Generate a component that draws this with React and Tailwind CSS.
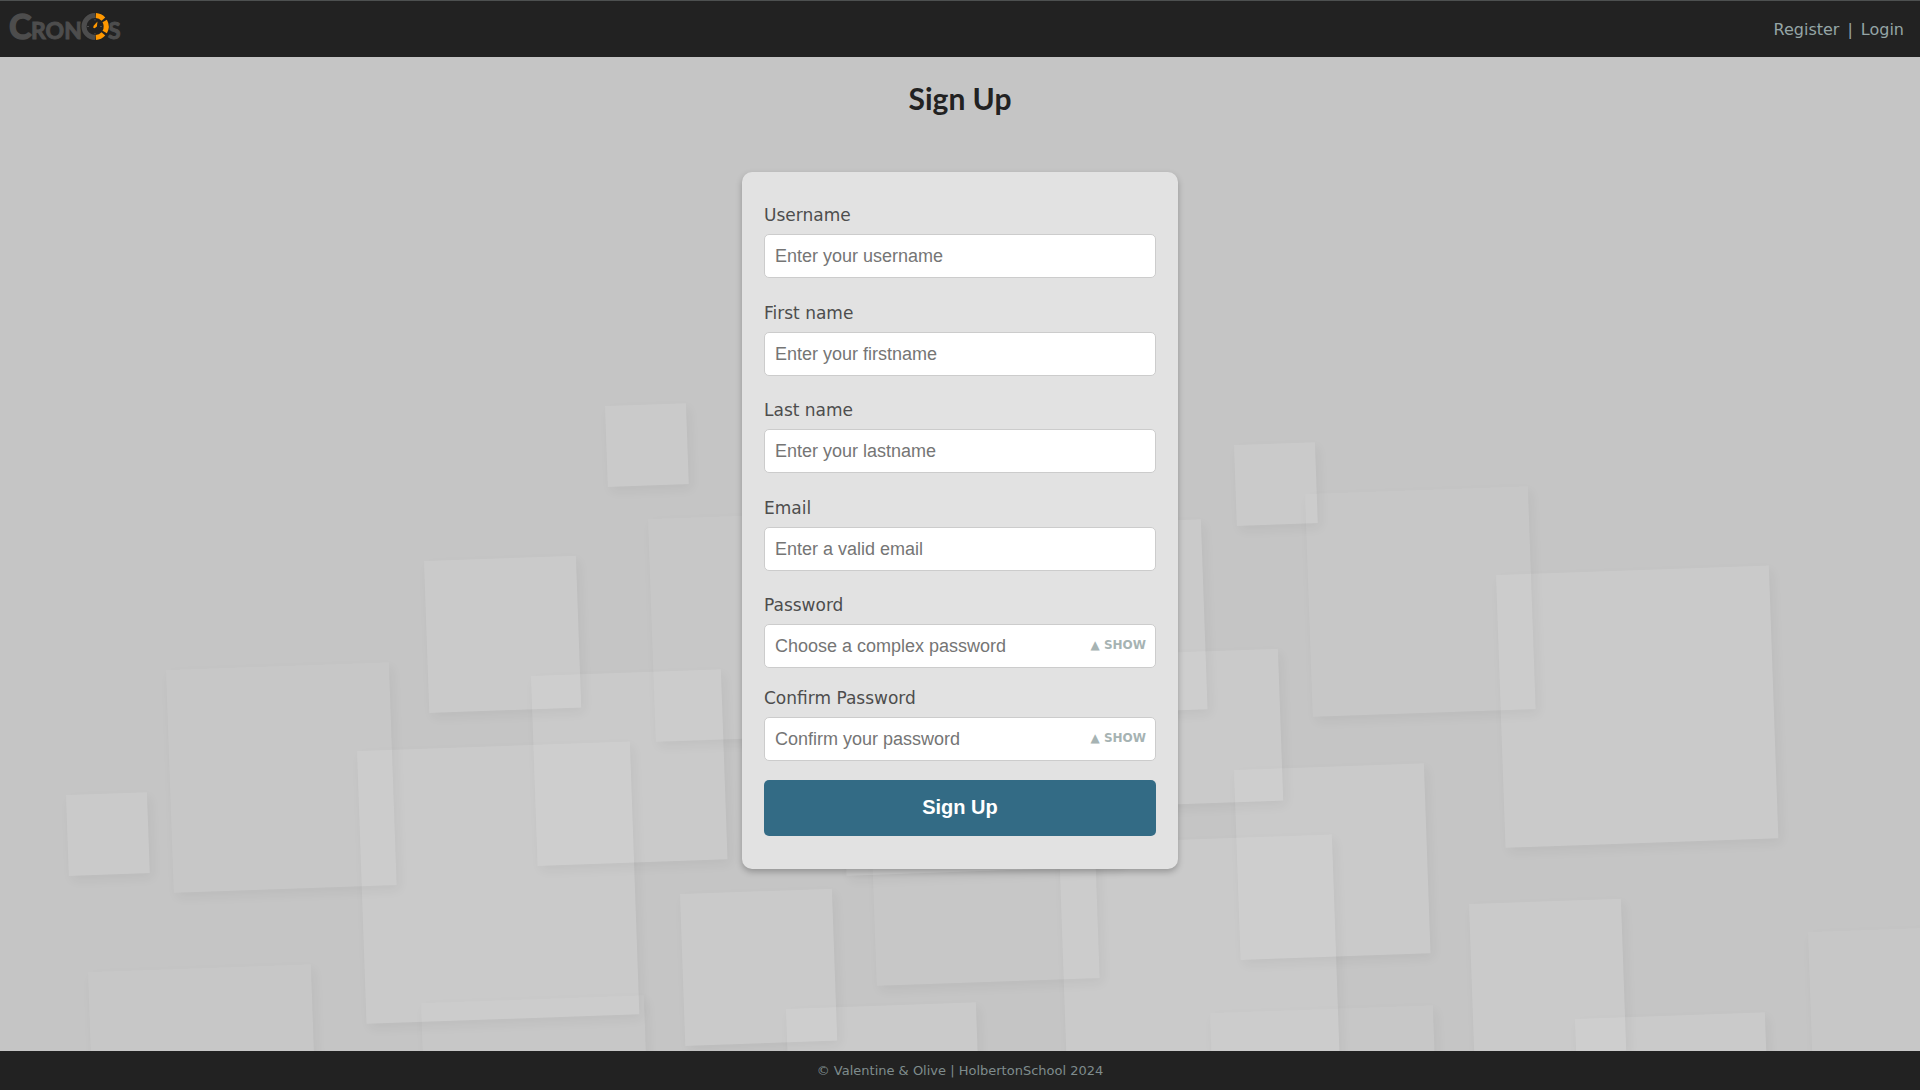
import { useState } from "react";

const SQUARES = [
  [605, 407, 81, 0], [424, 562, 152, 0], [166, 671, 223, 1], [531, 677, 190, 0],
  [648, 520, 223, 1], [357, 752, 273, 0], [66, 796, 81, 0], [88, 973, 223, 1],
  [421, 1004, 223, 1], [680, 895, 152, 0], [786, 1010, 190, 0], [869, 764, 223, 1],
  [1059, 845, 273, 0], [1234, 771, 190, 0], [1126, 655, 152, 0], [1011, 527, 190, 0],
  [1234, 446, 81, 0], [1305, 495, 223, 1], [1496, 576, 273, 0], [1469, 905, 152, 0],
  [1575, 1020, 190, 0], [1808, 933, 223, 1], [1210, 1014, 223, 1], [837, 604, 273, 0],
];

function Backdrop() {
  return (
    <svg aria-hidden="true" viewBox="0 57 1920 994" preserveAspectRatio="xMidYMid slice" className="absolute inset-0 size-full">
      <defs>
        <filter id="outer-shadow" x="-30%" y="-30%" width="160%" height="160%" colorInterpolationFilters="sRGB">
          <feGaussianBlur in="SourceAlpha" stdDeviation="6" />
          <feOffset dx="3" dy="5" />
          <feComposite operator="out" in2="SourceAlpha" />
        </filter>
      </defs>
      {SQUARES.map(([x, y, s, dim]) => (
        <g key={`${x}-${y}`} transform={`translate(${x} ${y - 1}) rotate(-2)`}>
          <g opacity="0.045">
            <rect width={s} height={s} fill="#000" filter="url(#outer-shadow)" />
          </g>
          <rect width={s} height={s} fill="#fff" opacity={dim ? 0.04 : 0.09} />
        </g>
      ))}
    </svg>
  );
}

function Logo() {
  return (
    <svg role="img" aria-label="CronOs" viewBox="-4 0 120 56" className="h-14 w-[120px]">
      <g fill="#4d4d4d" stroke="#4d4d4d" fontFamily="Lato, 'Liberation Sans', sans-serif" fontWeight="700">
        <text x="-2" y="38" fontSize="34" strokeWidth="1.5">C</text>
        <text x="20" y="38" fontSize="23" strokeWidth="1">RON</text>
        <text x="97" y="38" fontSize="23" strokeWidth="1">S</text>
      </g>
      <circle cx="84" cy="25.500" r="14.500" fill="#222" />
      <g fill="none" strokeWidth="5">
        <path d="M84 14.500a11 11 0 0 0 0 22" stroke="#4d4d4d" />
        <path d="M84.800 14.500a11 11 0 0 1 7.600 3.600M93.700 20a11 11 0 0 1 0 11M92.400 32.900a11 11 0 0 1-7.600 3.600" stroke="#ff9800" />
        <path d="M76 25.500h2M89 25.500h2M84 18v1.500M84 32v1.500" stroke="#4d4d4d" strokeWidth="1" />
      </g>
      <path d="M86.500 20.500l-.6 5-2.200 1.800-1.500-.6.400-2z" fill="#ff9800" />
    </svg>
  );
}

const inputClass =
  "block h-11 w-full rounded-[5px] border border-[#ccc] bg-white px-2.5 font-['Liberation_Sans',sans-serif] text-[18px] text-[#333] placeholder:text-[#757575] outline-none";

function Field({ id, label, placeholder, type = "text", className = "" }) {
  const secret = type === "password";
  const [shown, setShown] = useState(false);
  return (
    <div className={className}>
      <label htmlFor={id} className="mb-[9px] block text-[17px] leading-5">{label}</label>
      <div className="relative">
        <input id={id} name={id} type={secret && shown ? "text" : type} placeholder={placeholder} className={inputClass} />
        {secret && (
          <button type="button" onClick={() => setShown(!shown)} className="absolute inset-y-0 right-2.5 flex cursor-pointer items-center pb-0.5 text-[12px] font-bold text-[#a6b3b3]">
            {shown ? "▼ HIDE" : "▲ SHOW"}
          </button>
        )}
      </div>
    </div>
  );
}

export default function App() {
  return (
    <div className="flex min-h-screen flex-col bg-[#c5c5c5] font-['DejaVu_Sans',sans-serif] text-[#4d4d4d]">
      <header className="flex h-[57px] items-center justify-between border-t border-[#4d5050] bg-[#222] pr-4 pl-[7px]">
        <a href="#home" className="block"><Logo /></a>
        <nav className="flex gap-2 pt-0.5 text-[16px] text-[#95a5a6]">
          <a href="#register">Register</a>
          <span>|</span>
          <a href="#login">Login</a>
        </nav>
      </header>
      <main className="relative flex flex-1 flex-col items-center overflow-hidden">
        <Backdrop />
        <h1 className="relative mt-[23px] font-[Lato,sans-serif] text-[30px] leading-9 font-bold text-[#222]">Sign Up</h1>
        <form onSubmit={(e) => e.preventDefault()} className="relative mt-14 w-full max-w-[436px] rounded-[10px] bg-[#e2e2e2] px-[22px] py-[33px] shadow-[0_3px_6px_rgba(0,0,0,0.25)]">
          <Field id="username" label="Username" placeholder="Enter your username" className="mb-[25px]" />
          <Field id="firstname" label="First name" placeholder="Enter your firstname" className="mb-6" />
          <Field id="lastname" label="Last name" placeholder="Enter your lastname" className="mb-[25px]" />
          <Field id="email" label="Email" placeholder="Enter a valid email" className="mb-6" />
          <Field id="password" label="Password" placeholder="Choose a complex password" type="password" className="mb-5" />
          <Field id="confirm" label="Confirm Password" placeholder="Confirm your password" type="password" className="mb-[19px]" />
          <button type="submit" className="block h-14 w-full cursor-pointer rounded-[5px] bg-[#336b85] pb-0.5 font-['Liberation_Sans',sans-serif] text-[20px] font-bold text-white">Sign Up</button>
        </form>
      </main>
      <footer className="flex h-[39px] items-center justify-center bg-[#222] text-[13px] text-[#7f8c8d]">
        <p>© Valentine &amp; Olive | HolbertonSchool 2024</p>
      </footer>
    </div>
  );
}
